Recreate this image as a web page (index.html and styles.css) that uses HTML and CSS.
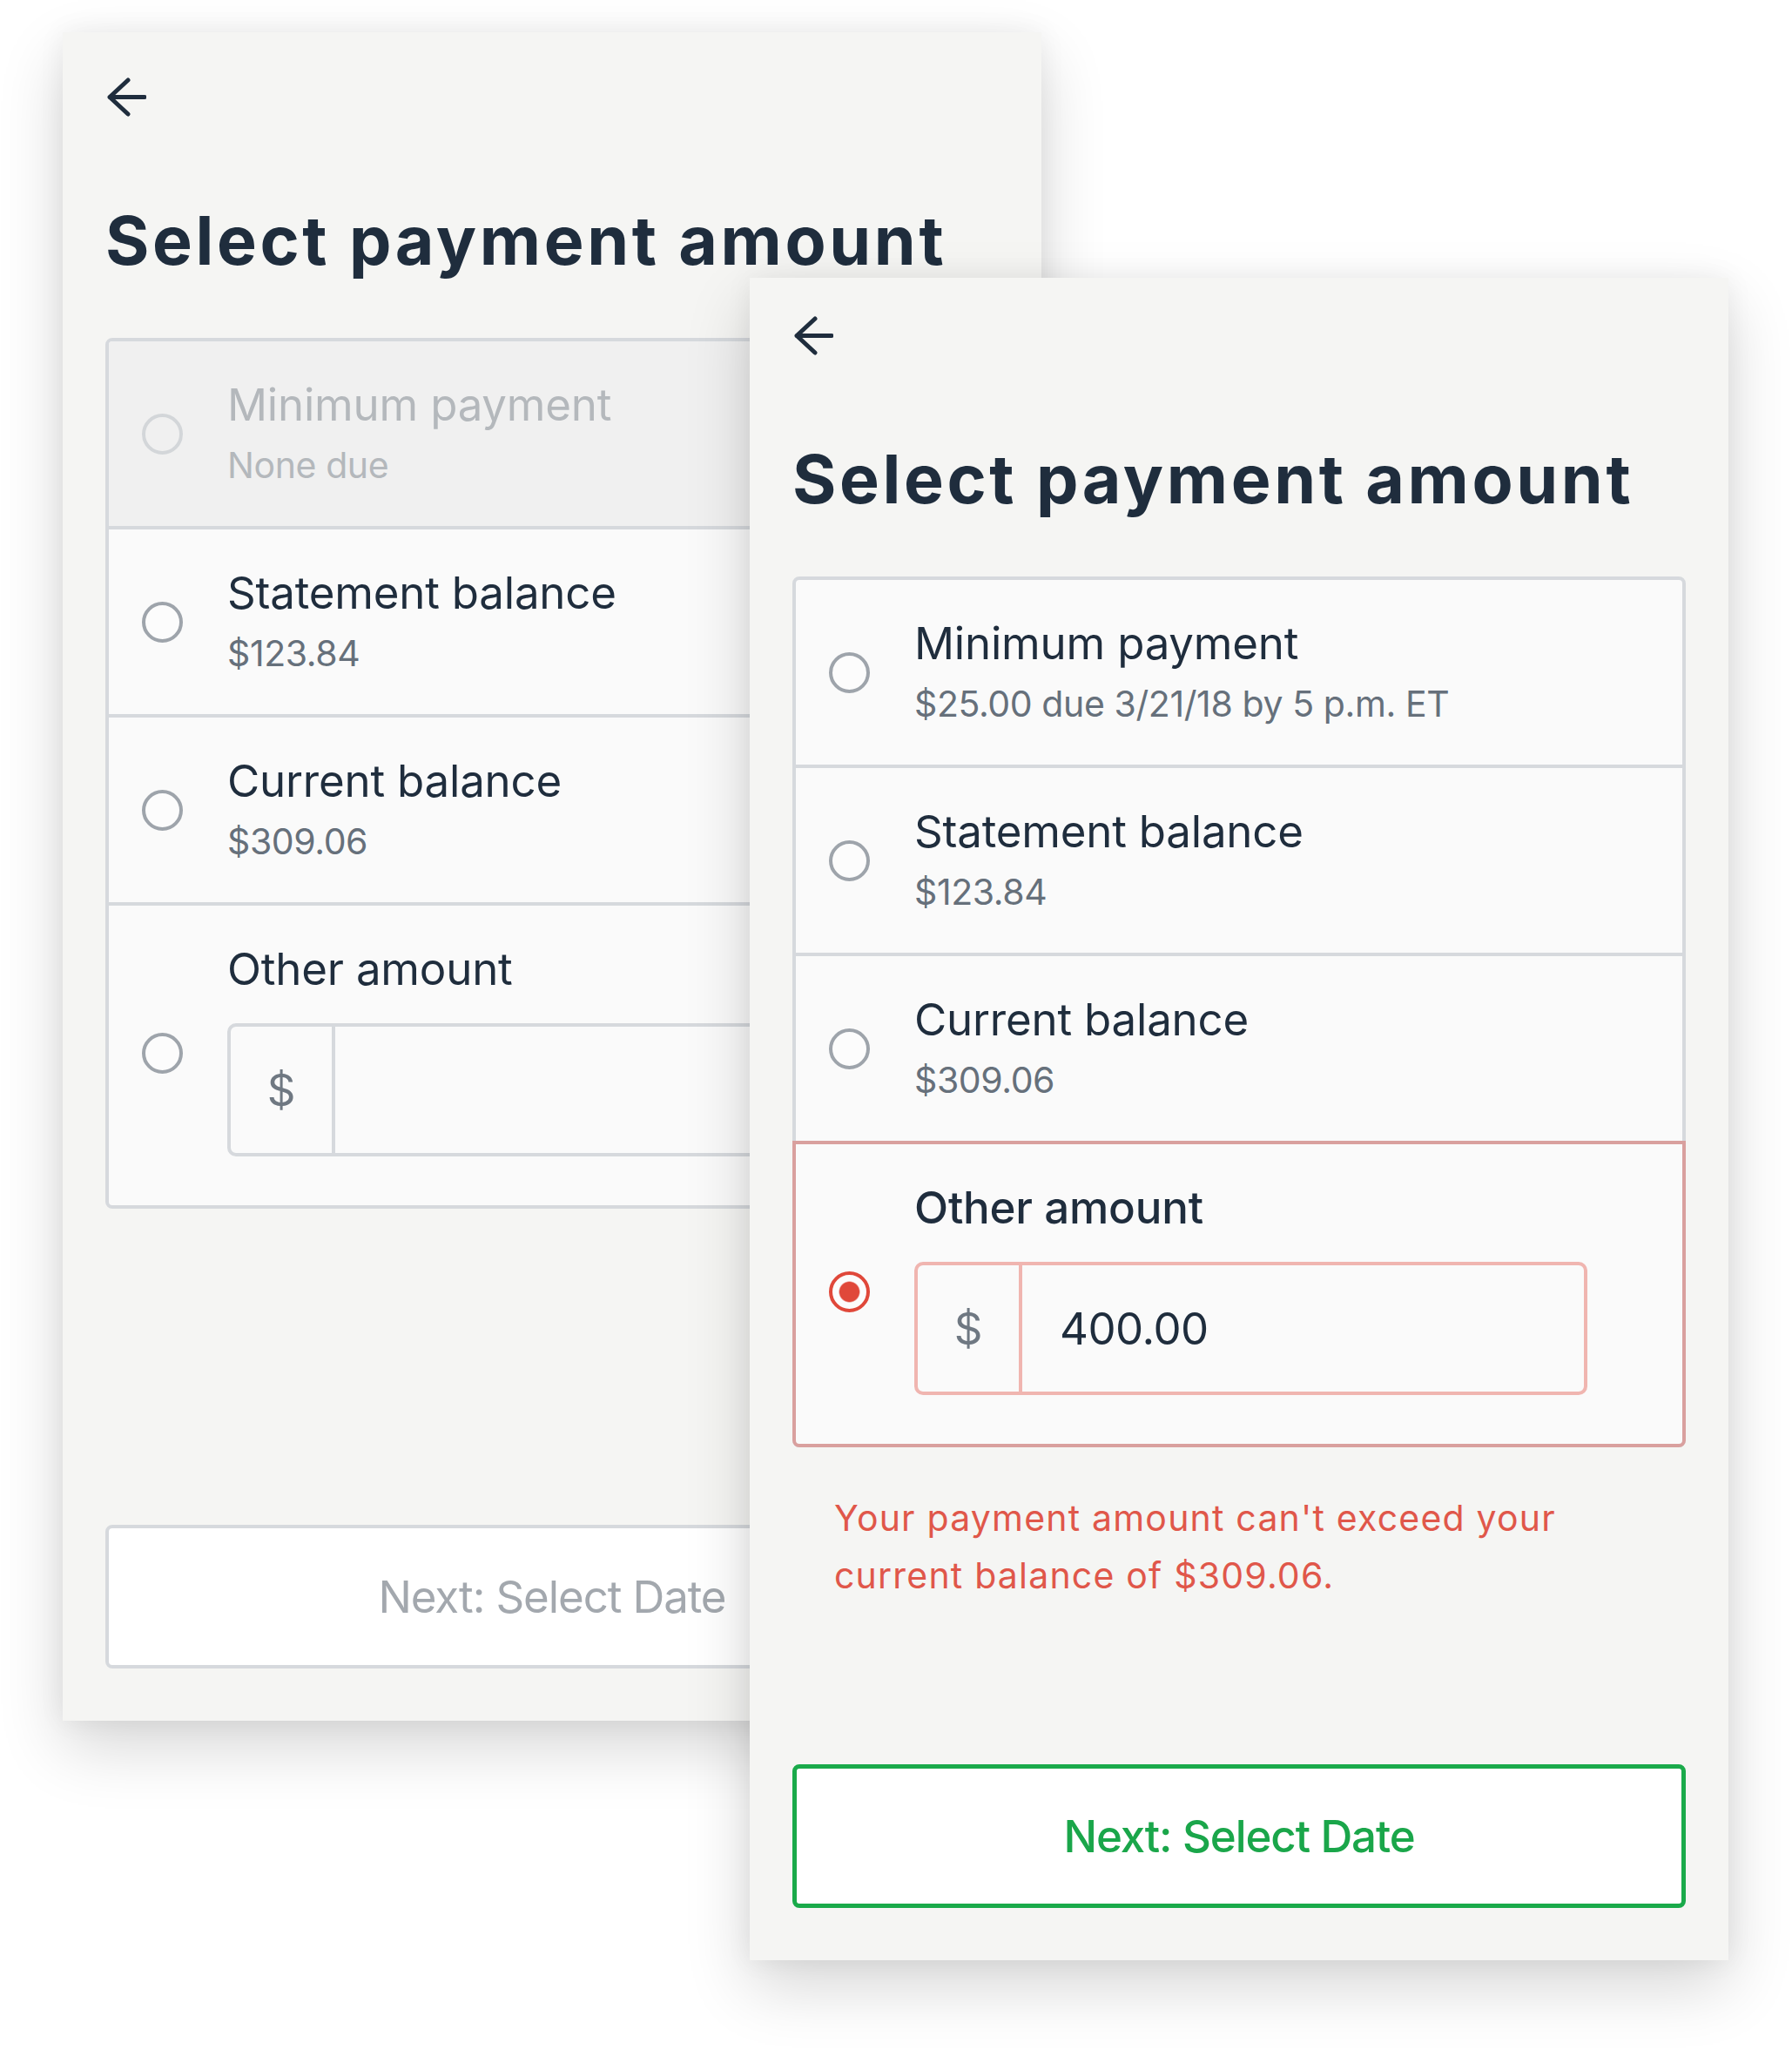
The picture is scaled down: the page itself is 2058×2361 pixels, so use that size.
FILE: index.html
```html
<!DOCTYPE html>
<html lang="en">
<head>
<meta charset="utf-8">
<title>Select payment amount</title>
<link rel="stylesheet" href="styles.css">
</head>
<body>
<div class="stage">
  <section class="card card--back">
    <div class="back-link" aria-label="Back">
      <svg viewBox="0 0 45 45" width="45" height="45"><path d="M3 22.5H43M24 3L3 22.5L24 42" fill="none" stroke="#1f2d3d" stroke-width="5" stroke-linecap="round" stroke-linejoin="round"/></svg>
    </div>
    <h1 class="title">Select payment amount</h1>
    <div class="options">
      <div class="option option--disabled">
        <span class="radio"></span>
        <div class="option-text">
          <div class="option-label">Minimum payment</div>
          <div class="option-sub">None due</div>
        </div>
      </div>
      <div class="option">
        <span class="radio"></span>
        <div class="option-text">
          <div class="option-label">Statement balance</div>
          <div class="option-sub">$123.84</div>
        </div>
      </div>
      <div class="option">
        <span class="radio"></span>
        <div class="option-text">
          <div class="option-label">Current balance</div>
          <div class="option-sub">$309.06</div>
        </div>
      </div>
      <div class="option option--other">
        <span class="radio"></span>
        <div class="option-text">
          <div class="option-label">Other amount</div>
          <div class="amount">
            <span class="amount-prefix">$</span>
            <span class="amount-value"></span>
          </div>
        </div>
      </div>
    </div>
    <div class="next next--disabled">Next: Select Date</div>
  </section>

  <section class="card card--front">
    <div class="back-link" aria-label="Back">
      <svg viewBox="0 0 45 45" width="45" height="45"><path d="M3 22.5H43M24 3L3 22.5L24 42" fill="none" stroke="#1f2d3d" stroke-width="5" stroke-linecap="round" stroke-linejoin="round"/></svg>
    </div>
    <h1 class="title">Select payment amount</h1>
    <div class="options">
      <div class="option">
        <span class="radio"></span>
        <div class="option-text">
          <div class="option-label">Minimum payment</div>
          <div class="option-sub">$25.00 due 3/21/18 by 5 p.m. ET</div>
        </div>
      </div>
      <div class="option">
        <span class="radio"></span>
        <div class="option-text">
          <div class="option-label">Statement balance</div>
          <div class="option-sub">$123.84</div>
        </div>
      </div>
      <div class="option">
        <span class="radio"></span>
        <div class="option-text">
          <div class="option-label">Current balance</div>
          <div class="option-sub">$309.06</div>
        </div>
      </div>
      <div class="option option--other option--selected">
        <span class="radio radio--checked"></span>
        <div class="option-text">
          <div class="option-label option-label--strong">Other amount</div>
          <div class="amount amount--error">
            <span class="amount-prefix">$</span>
            <span class="amount-value">400.00</span>
          </div>
        </div>
      </div>
    </div>
    <p class="error">Your payment amount can't exceed your<br>current balance of $309.06.</p>
    <div class="next">Next: Select Date</div>
  </section>
</div>
</body>
</html>
```

FILE: styles.css
```css
html, body {
  margin: 0;
  padding: 0;
  background: #ffffff;
}

.stage {
  position: relative;
  width: 2058px;
  height: 2361px;
  overflow: hidden;
  background: #ffffff;
  font-family: Inter, "Noto Sans", "Liberation Sans", sans-serif;
  color: #1f2d3d;
}

.card {
  position: absolute;
  box-sizing: border-box;
  width: 1124px;
  display: flex;
  flex-direction: column;
  padding: 44px 49px 60px;
  background: #f5f5f3;
  box-shadow: 0 30px 70px rgba(0, 0, 0, 0.16), 0 0 30px rgba(0, 0, 0, 0.06);
}

.card--back {
  left: 72px;
  top: 37px;
  height: 1939px;
  padding-top: 52px;
}

.card--front {
  left: 861px;
  top: 319px;
  height: 1932px;
}

.back-link {
  width: 45px;
  height: 45px;
  margin-left: 2px;
}

.back-link svg {
  display: block;
}

.title {
  margin: 96px 0 0;
  font-size: 77px;
  line-height: 92px;
  font-weight: 700;
  letter-spacing: 3.6px;
  color: #1f2d3d;
  white-space: nowrap;
}

.options {
  margin-top: 66px;
  display: flex;
  flex-direction: column;
  border: 4px solid #d6d9dd;
  border-radius: 8px;
  background: #fafafa;
}

.option {
  display: flex;
  align-items: center;
  gap: 51px;
  padding: 37px 38px;
  border-bottom: 4px solid #d6d9dd;
}

.option:last-child {
  border-bottom: none;
}

.option--disabled {
  background: #f0f0f0;
  border-radius: 4px 4px 0 0;
}

.option--other {
  padding-bottom: 56px;
}

.option--other .radio {
  margin-top: 13px;
}

.option--selected {
  margin: -4px -4px -4px;
  border: 4px solid #d9a09e;
  border-radius: 0 0 8px 8px;
  background: #fafafa;
}

.option--selected.option:last-child {
  border-bottom: 4px solid #d9a09e;
}

.radio {
  flex: none;
  box-sizing: border-box;
  width: 47px;
  height: 47px;
  border: 4px solid #9ea4ab;
  border-radius: 50%;
  background: #fcfcfc;
}

.option--disabled .radio {
  border-color: #d3d6d9;
  background: transparent;
}

.radio--checked {
  border-color: #e0483a;
  background: radial-gradient(circle closest-side, #e0483a 0, #e0483a 11px, #fcfcfc 12.5px);
}

.option-text {
  display: flex;
  flex-direction: column;
}

.option-label {
  font-size: 51px;
  line-height: 72px;
  letter-spacing: -0.2px;
  color: #1f2d3d;
  white-space: nowrap;
}

.option-label--strong {
  font-weight: 500;
}

.option-sub {
  font-size: 41px;
  line-height: 66px;
  letter-spacing: -0.4px;
  color: #66707b;
  white-space: nowrap;
}

.option--disabled .option-label,
.option--disabled .option-sub {
  color: #b4b8bc;
}

.amount {
  display: flex;
  box-sizing: border-box;
  width: 773px;
  height: 153px;
  margin-top: 26px;
  border: 4px solid #d6d9dd;
  border-radius: 10px;
  background: #fafafa;
}

.amount--error {
  border-color: #f0b5b0;
}

.amount-prefix {
  flex: none;
  width: 116px;
  display: flex;
  align-items: center;
  justify-content: center;
  border-right: 4px solid #d6d9dd;
  font-size: 51px;
  color: #6f7882;
}

.amount--error .amount-prefix {
  border-right-color: #f0b5b0;
}

.amount-value {
  display: flex;
  align-items: center;
  padding-left: 43px;
  font-size: 51px;
  letter-spacing: -0.5px;
  color: #1f2d3d;
}

.error {
  margin: 48px 0 0;
  padding-left: 48px;
  font-size: 41px;
  line-height: 66px;
  letter-spacing: 1.2px;
  color: #e0574a;
  white-space: nowrap;
}

.next {
  margin-top: auto;
  box-sizing: border-box;
  height: 165px;
  display: flex;
  align-items: center;
  justify-content: center;
  border: 5px solid #1aaa4a;
  border-radius: 8px;
  background: #ffffff;
  font-size: 51px;
  font-weight: 500;
  letter-spacing: -1.1px;
  color: #1aa64a;
}

.next--disabled {
  border: 4px solid #d6d9dd;
  font-weight: 400;
  color: #a3a8ae;
}
```
